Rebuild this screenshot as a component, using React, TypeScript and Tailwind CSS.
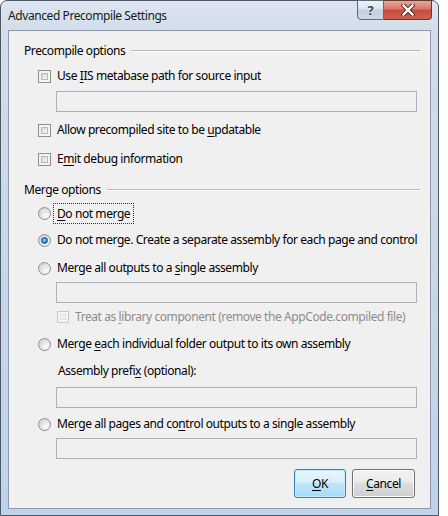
import React from "react";

function U({ children }: { children: React.ReactNode }) {
  return <span className="underline decoration-[1px] underline-offset-[2px]">{children}</span>;
}

function Check({ disabled }: { disabled?: boolean }) {
  return (
    <div
      className={
        disabled
          ? "w-[12px] h-[12px] shrink-0 border border-[#c9c9c9] bg-[#f4f4f4] p-[2px]"
          : "w-[13px] h-[13px] shrink-0 border border-[#8e8f8f] bg-[#f4f4f4] p-[2px]"
      }
    >
      <div
        className={
          disabled
            ? "w-full h-full border border-[#e0e0e0] bg-[#f2f2f2]"
            : "w-full h-full border border-[#b5b8bd] bg-[linear-gradient(135deg,#d3d6da,#f8f8f8)]"
        }
      />
    </div>
  );
}

function Radio({ checked }: { checked?: boolean }) {
  return (
    <div className="w-[13px] h-[13px] shrink-0 rounded-full border border-[#8e8f8f] bg-[radial-gradient(circle_at_65%_70%,#fdfdfd,#d9d9d9_70%,#cfcfcf)] flex items-center justify-center">
      {checked ? (
        <div className="w-[7px] h-[7px] rounded-full border border-[#1b4f86] bg-[radial-gradient(circle_at_45%_40%,#9fe0ff,#2d7ec4_60%,#164f8f)]" />
      ) : null}
    </div>
  );
}

function TextBox({ className }: { className?: string }) {
  return (
    <div
      className={
        "h-[21px] w-[361px] ml-[47px] border border-[#adb2b5] bg-[#f0f0f0] " + (className || "")
      }
    />
  );
}

function Header({ label, className }: { label: string; className?: string }) {
  return (
    <div className={"flex items-center h-[20px] pl-[15px] pr-[10px] " + (className || "")}>
      <span className="leading-[20px] whitespace-nowrap">{label}</span>
      <div className="flex-1 ml-[6px] h-[1px] bg-[#b9b9b9] border-b border-white box-content" />
    </div>
  );
}

export default function App() {
  return (
    <div className="w-[448px] h-[516px] bg-white text-[12px] tracking-[-0.42px] text-black font-['Segoe_UI','Noto_Sans',sans-serif] overflow-hidden">
      <div className="relative w-[439px] h-[516px] rounded-t-[7px] border border-[#4d5866] bg-[linear-gradient(180deg,#dde6f0_0%,#d2dde9_6%,#c9d7e7_50%,#bfd3e9_100%)] flex flex-col px-[7px] pb-[6px]">
        {/* title bar */}
        <div className="h-[29px] flex items-center shrink-0">
          <span className="leading-[18px] text-[#1a1a1a] whitespace-nowrap">Advanced Precompile Settings</span>
        </div>
        <div className="absolute top-[-1px] right-[6px] flex h-[20px]">
          <div className="w-[27px] h-[20px] border border-[#5d6a7c] rounded-bl-[4px] bg-[linear-gradient(180deg,#eef3f8_0%,#dbe4ee_45%,#c3d0df_50%,#ccd8e6_100%)] flex items-center justify-center">
            <span className="text-[13px] leading-[13px] font-bold text-[#3a4656] [text-shadow:0_0_2px_#ffffff]">?</span>
          </div>
          <div className="w-[48px] h-[20px] border border-l-0 border-[#5d3a36] rounded-br-[4px] bg-[linear-gradient(180deg,#e8a696_0%,#d8776a_45%,#c64b3b_50%,#d1604e_100%)] flex items-center justify-center">
            <svg width="14" height="12" viewBox="0 0 14 12">
              <path d="M2.5 1.5 L11.5 10.5 M11.5 1.5 L2.5 10.5" stroke="#5a2a24" strokeWidth="4.4" strokeLinecap="square" fill="none" />
              <path d="M2.5 1.5 L11.5 10.5 M11.5 1.5 L2.5 10.5" stroke="#ffffff" strokeWidth="2.4" strokeLinecap="square" fill="none" />
            </svg>
          </div>
        </div>

        {/* client area */}
        <div className="flex-1 border border-[#8a9bb1] bg-[#f0f0f0] flex flex-col">
          <Header label="Precompile options" className="mt-[10px]" />

          <div className="flex items-center h-[20px] pl-[29px] mt-[5px]">
            <Check />
            <span className="ml-[6px] leading-[20px] whitespace-nowrap">
              Use <U>I</U>IS metabase path for source input
            </span>
          </div>
          <TextBox className="mt-[5px]" />

          <div className="flex items-center h-[20px] pl-[29px] mt-[8px]">
            <Check />
            <span className="ml-[6px] leading-[20px] whitespace-nowrap">
              Allow precompiled site to be <U>u</U>pdatable
            </span>
          </div>
          <div className="flex items-center h-[20px] pl-[29px] mt-[9px]">
            <Check />
            <span className="ml-[6px] leading-[20px] whitespace-nowrap">
              E<U>m</U>it debug information
            </span>
          </div>

          <Header label="Merge options" className="mt-[11px]" />

          <div className="flex items-center h-[21px] pl-[29px] mt-[3px]">
            <Radio />
            <span className="ml-[2px] px-[3px] border border-dotted border-[#333] leading-[19px] whitespace-nowrap">
              <U>D</U>o not merge
            </span>
          </div>
          <div className="flex items-center h-[20px] pl-[29px] mt-[6px]">
            <Radio checked />
            <span className="ml-[6px] leading-[20px] whitespace-nowrap">
              Do not merge. Create a separate assembly for each page and control
            </span>
          </div>
          <div className="flex items-center h-[20px] pl-[29px] mt-[8px]">
            <Radio />
            <span className="ml-[6px] leading-[20px] whitespace-nowrap">
              Merge all outputs to a <U>s</U>ingle assembly
            </span>
          </div>
          <TextBox className="mt-[4px]" />
          <div className="flex items-center h-[20px] pl-[48px] mt-[4px]">
            <Check disabled />
            <span className="ml-[6px] leading-[20px] whitespace-nowrap text-[#8d8d8d]">
              Treat as <U>l</U>ibrary component (remove the AppCode.compiled file)
            </span>
          </div>
          <div className="flex items-center h-[20px] pl-[29px] mt-[7px]">
            <Radio />
            <span className="ml-[6px] leading-[20px] whitespace-nowrap">
              Merge <U>e</U>ach individual folder output to its own assembly
            </span>
          </div>
          <div className="flex items-center h-[20px] pl-[49px] mt-[7px]">
            <span className="leading-[20px] whitespace-nowrap">
              Assembly prefi<U>x</U> (optional):
            </span>
          </div>
          <TextBox className="mt-[6px]" />
          <div className="flex items-center h-[20px] pl-[29px] mt-[6px]">
            <Radio />
            <span className="ml-[6px] leading-[20px] whitespace-nowrap">
              Merge all pages and co<U>n</U>trol outputs to a single assembly
            </span>
          </div>
          <TextBox className="mt-[4px]" />

          <div className="flex justify-end gap-[6px] pr-[15px] mt-[10px]">
            <div className="w-[52px] h-[29px] rounded-[3px] border border-[#3c7fb1] bg-[linear-gradient(180deg,#eaf6fd_0%,#d9f0fc_45%,#bee6fd_50%,#a7d9f5_100%)] shadow-[inset_0_0_0_1px_#c4ecff] flex items-center justify-center">
              <span className="leading-[16px]"><U>O</U>K</span>
            </div>
            <div className="w-[63px] h-[29px] rounded-[3px] border border-[#707070] bg-[linear-gradient(180deg,#f2f2f2_0%,#ebebeb_45%,#dddddd_50%,#cfcfcf_100%)] shadow-[inset_0_0_0_1px_#fcfcfc] flex items-center justify-center">
              <span className="leading-[16px]"><U>C</U>ancel</span>
            </div>
          </div>
        </div>
      </div>
    </div>
  );
}
